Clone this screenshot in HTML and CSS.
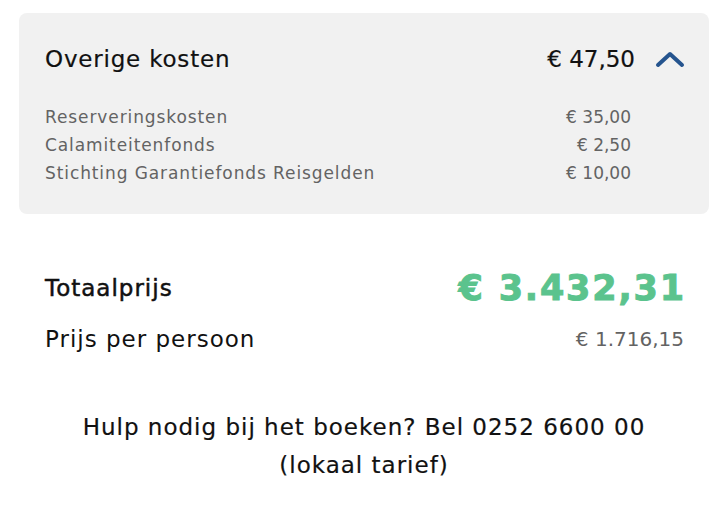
FILE: index.html
```html
<!DOCTYPE html>
<html lang="nl">
<head>
    <meta charset="UTF-8">
    <meta name="viewport" content="width=device-width, initial-scale=1.0">
    <title>Prijsoverzicht</title>
    <link rel="stylesheet" href="styles.css">
</head>
<body>
    <div class="costs">
        <div class="costs-head">
            <span class="costs-title">Overige kosten</span>
            <span class="costs-total">€ 47,50</span>
            <svg class="chevron" width="30" height="18" viewBox="0 0 30 18">
                <path d="M3 15 L15 4 L27 15" fill="none" stroke="#25548e" stroke-width="4" stroke-linecap="round" stroke-linejoin="round"/>
            </svg>
        </div>
        <div class="costs-list">
            <div class="cost-row"><span>Reserveringskosten</span><span class="amount">€ 35,00</span></div>
            <div class="cost-row"><span>Calamiteitenfonds</span><span class="amount">€ 2,50</span></div>
            <div class="cost-row"><span>Stichting Garantiefonds Reisgelden</span><span class="amount">€ 10,00</span></div>
        </div>
    </div>

    <div class="totals">
        <div class="total-row">
            <span class="total-label">Totaalprijs</span>
            <span class="total-price">€ 3.432,31</span>
        </div>
        <div class="person-row">
            <span class="person-label">Prijs per persoon</span>
            <span class="person-price">€ 1.716,15</span>
        </div>
    </div>

    <p class="help">Hulp nodig bij het boeken? Bel 0252 6600 00<br>(lokaal tarief)</p>
</body>
</html>
```

FILE: styles.css
```css
body {
    margin: 0;
    padding: 13px 17px 0 19px;
    background: white;
    font-family: "DejaVu Sans", sans-serif;
    color: #111;
}
.costs {
    background: #f1f1f1;
    border-radius: 8px;
    padding: 31px 24px 27px 26px;
}
.costs-head {
    display: flex;
    align-items: center;
    height: 30px;
}
.costs-title {
    flex: 1;
    font-size: 23px;
    letter-spacing: 0.8px;
    -webkit-text-stroke: 0.2px #111;
}
.costs-total {
    font-size: 23px;
    -webkit-text-stroke: 0.2px #111;
}
.chevron {
    margin-left: 20px;
}
.costs-list {
    margin-top: 29px;
    padding-right: 54px;
}
.cost-row {
    display: flex;
    justify-content: space-between;
    height: 28px;
    line-height: 28px;
    font-size: 17px;
    color: #636363;
    letter-spacing: 0.9px;
}
.cost-row .amount {
    letter-spacing: 0;
}
.totals {
    margin-top: 49px;
    padding: 0 25px 0 26px;
}
.total-row, .person-row {
    display: flex;
    justify-content: space-between;
    align-items: center;
}
.total-row {
    height: 50px;
}
.total-label {
    font-size: 23px;
    letter-spacing: 1px;
    -webkit-text-stroke: 0.5px #111;
}
.total-price {
    font-weight: bold;
    font-size: 35px;
    letter-spacing: 1.8px;
    margin-right: -1.8px;
    color: #5bc38d;
    -webkit-text-stroke: 1px #5bc38d;
}
.person-row {
    margin-top: 10px;
    height: 32px;
}
.person-label {
    font-size: 23px;
    letter-spacing: 1px;
}
.person-price {
    font-size: 20px;
    color: #636363;
}
.help {
    margin: 53px 0 0;
    text-align: center;
    font-size: 23px;
    letter-spacing: 1px;
    line-height: 38px;
    -webkit-text-stroke: 0.2px #111;
}
```
